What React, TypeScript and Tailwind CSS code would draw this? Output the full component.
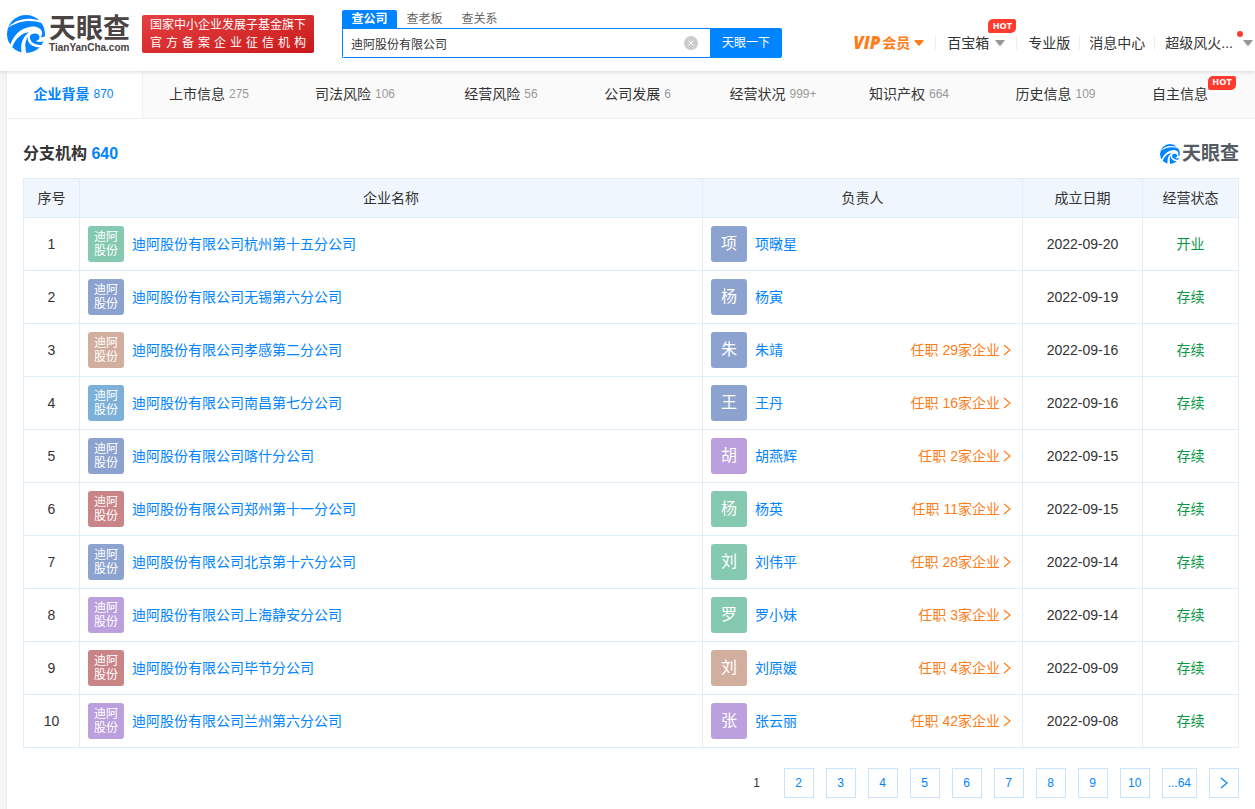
import { useState } from "react";
import { clsx } from "clsx";

type Branch = {
  name: string;
  logo: string;
  person: string;
  avatar: string;
  posts?: number;
  date: string;
  status: string;
};

const GREEN = "bg-[#84c9b0]";
const BLUE = "bg-[#8da3cf]";
const TAN = "bg-[#d2ae9e]";
const SKY = "bg-[#7db0d8]";
const RED = "bg-[#c98488]";
const PURPLE = "bg-[#bc9fdd]";

const branches: Branch[] = [
  { name: "迪阿股份有限公司杭州第十五分公司", logo: GREEN, person: "项暾星", avatar: BLUE, date: "2022-09-20", status: "开业" },
  { name: "迪阿股份有限公司无锡第六分公司", logo: BLUE, person: "杨寅", avatar: BLUE, date: "2022-09-19", status: "存续" },
  { name: "迪阿股份有限公司孝感第二分公司", logo: TAN, person: "朱靖", avatar: BLUE, posts: 29, date: "2022-09-16", status: "存续" },
  { name: "迪阿股份有限公司南昌第七分公司", logo: SKY, person: "王丹", avatar: BLUE, posts: 16, date: "2022-09-16", status: "存续" },
  { name: "迪阿股份有限公司喀什分公司", logo: BLUE, person: "胡燕辉", avatar: PURPLE, posts: 2, date: "2022-09-15", status: "存续" },
  { name: "迪阿股份有限公司郑州第十一分公司", logo: RED, person: "杨英", avatar: GREEN, posts: 11, date: "2022-09-15", status: "存续" },
  { name: "迪阿股份有限公司北京第十六分公司", logo: BLUE, person: "刘伟平", avatar: GREEN, posts: 28, date: "2022-09-14", status: "存续" },
  { name: "迪阿股份有限公司上海静安分公司", logo: PURPLE, person: "罗小妹", avatar: GREEN, posts: 3, date: "2022-09-14", status: "存续" },
  { name: "迪阿股份有限公司毕节分公司", logo: RED, person: "刘原媛", avatar: TAN, posts: 4, date: "2022-09-09", status: "存续" },
  { name: "迪阿股份有限公司兰州第六分公司", logo: PURPLE, person: "张云丽", avatar: PURPLE, posts: 42, date: "2022-09-08", status: "存续" },
];

const sections = [
  { label: "企业背景", count: "870" },
  { label: "上市信息", count: "275" },
  { label: "司法风险", count: "106" },
  { label: "经营风险", count: "56" },
  { label: "公司发展", count: "6" },
  { label: "经营状况", count: "999+" },
  { label: "知识产权", count: "664" },
  { label: "历史信息", count: "109" },
  { label: "自主信息", hot: true },
];

const pages = ["2", "3", "4", "5", "6", "7", "8", "9", "10", "...64"];

function LogoMark({ className }: { className: string }) {
  return (
    <svg aria-hidden="true" viewBox="0 0 114 114" className={className}>
      <circle cx="57" cy="57" r="57" fill="#0084ff" />
      <g fill="#fff">
        <path d="M2 40C20 14 58 4 97 16l8 9C72 12 32 18 2 40z" />
        <path d="M9 90C20 62 38 40 70 35c16-3 30 3 34 13 3 8 1 14-3 19l14-2-1 12c-10 5-20 5-28 1 10-2 14-10 10-17-4-6-14-7-22-3-2 1-4 2-5 4-2 16 8 27 38 29l-5 7C74 98 60 84 62 66c-8 12-9 28-4 48H44c-5-24 2-47 22-62C44 54 26 70 15 98z" />
      </g>
    </svg>
  );
}

function Caret({ className }: { className: string }) {
  return (
    <svg aria-hidden="true" viewBox="0 0 10 6" className={clsx("h-[6px] w-[10px] shrink-0 fill-current", className)}>
      <path d="M1 0h8q1 .2.500 1L5.700 5.600q-.7.600-1.400 0L.5 1Q0 .2 1 0z" />
    </svg>
  );
}

function Chevron({ className }: { className?: string }) {
  return (
    <svg aria-hidden="true" viewBox="0 0 8 12" className={clsx("h-3 w-2 fill-none stroke-current", className)}>
      <path d="M1 1l6 5-6 5" strokeWidth="1.200" />
    </svg>
  );
}

function HotBadge({ className }: { className: string }) {
  return (
    <span
      className={clsx(
        "flex h-[14px] w-7 items-center justify-center rounded-tl-[5px] rounded-tr-[2px] rounded-br-[5px] rounded-bl-[2px] bg-[#ff3b30] font-['Open_Sans',sans-serif] text-[9px] font-bold text-white",
        className,
      )}
    >
      HOT
    </span>
  );
}

function Header() {
  const [query, setQuery] = useState("迪阿股份有限公司");

  return (
    <header className="relative z-10 flex h-[71px] items-start bg-white pl-[7px] shadow-[0_1px_4px_rgba(0,0,0,0.14)]">
      <a href="#" className="mt-[15px] flex shrink-0 items-start text-[#4a4343]">
        <LogoMark className="h-[38px] w-[38px]" />
        <span className="ml-1 flex w-[82px] flex-col">
          <span className="text-[27px] leading-7 font-bold whitespace-nowrap">天眼查</span>
          <span className="text-[10px] leading-[10px] font-bold">TianYanCha.com</span>
        </span>
      </a>
      <div className="mt-[15px] ml-[11px] h-[38px] w-[172px] shrink-0 rounded-[2px] bg-linear-to-br from-[#e63f41] to-[#c91719] px-2 pt-px text-xs leading-[18px] text-white">
        <p className="whitespace-nowrap">国家中小企业发展子基金旗下</p>
        <p className="[text-align-last:justify]">官 方 备 案 企 业 征 信 机 构</p>
      </div>

      <form className="mt-[10px] ml-7 w-[440px] shrink-0" onSubmit={(event) => event.preventDefault()}>
        <div className="flex h-[18px] text-xs leading-[18px] text-[#666]">
          <button type="button" className="w-[55px] rounded-t-[2px] bg-[#0084ff] font-bold text-white">查公司</button>
          <button type="button" className="w-[55px]">查老板</button>
          <button type="button" className="w-[55px]">查关系</button>
        </div>
        <div className="flex h-[30px]">
          <div className="relative flex-1">
            <input
              type="text"
              aria-label="查公司"
              value={query}
              onChange={(event) => setQuery(event.target.value)}
              className="h-full w-full rounded-bl-[2px] border border-r-0 border-[#0084ff] bg-white px-2 text-xs text-[#333] outline-none"
            />
            <button type="button" aria-label="清空" onClick={() => setQuery("")} className="absolute top-2 right-3">
              <svg aria-hidden="true" viewBox="0 0 14 14" className="h-[14px] w-[14px]">
                <circle cx="7" cy="7" r="7" fill="#ccc" />
                <path d="M4.500 4.500l5 5M9.500 4.500l-5 5" stroke="#fff" />
              </svg>
            </button>
          </div>
          <button type="submit" className="w-[72px] rounded-r-[2px] bg-[#0084ff] text-xs text-white">天眼一下</button>
        </div>
      </form>

      <nav className="mt-8 ml-auto flex h-[22px] shrink-0 items-center text-sm whitespace-nowrap text-[#333]">
        <a href="#" className="flex items-center text-[#ff7d18]">
          <span className="font-['Open_Sans',sans-serif] text-[17px] font-extrabold italic">VIP</span>
          <span className="ml-[2px] font-bold">会员</span>
          <Caret className="ml-1" />
        </a>
        <a href="#" className="relative ml-[11px] flex items-center pl-3">
          <span className="absolute left-0 h-[14px] w-px bg-[#eee]" />
          百宝箱
          <Caret className="ml-[6px] text-[#999]" />
          <HotBadge className="absolute -top-[14px] left-[53px]" />
        </a>
        <a href="#" className="relative ml-[11px] flex items-center pl-3">
          <span className="absolute left-0 h-[14px] w-px bg-[#eee]" />
          专业版
        </a>
        <a href="#" className="relative ml-[9px] flex items-center pl-[10px]">
          <span className="absolute left-0 h-[14px] w-px bg-[#eee]" />
          消息中心
        </a>
        <a href="#" className="relative ml-[9px] flex items-center pr-[2px] pl-[11px]">
          <span className="absolute left-0 h-[14px] w-px bg-[#eee]" />
          超级风火...
          <Caret className="ml-[10px] text-[#999]" />
          <span className="absolute -top-[2px] right-3 h-[6px] w-[6px] rounded-full bg-[#ff3b30]" />
        </a>
      </nav>
    </header>
  );
}

function SectionTabs() {
  return (
    <nav className="grid h-12 grid-cols-[136fr_134fr_158fr_134fr_139fr_132fr_140fr_153fr_122fr] border-b border-[#f0f0f0] bg-[#fafafa]">
      {sections.map((section, index) => (
        <a
          key={section.label}
          href="#"
          className={clsx(
            "flex items-center justify-center gap-1 pb-[2px] text-sm whitespace-nowrap",
            index === 0 && "border-r border-[#f0f0f0] bg-white font-bold text-[#0084ff]",
            index > 0 && "text-[#333]",
            section.count && "pr-[2px]",
          )}
        >
          {section.label}
          {section.count ? (
            <span className={clsx("text-xs font-normal", index > 0 && "text-[#999]")}>{section.count}</span>
          ) : null}
          {section.hot ? <HotBadge className="-ml-1 mb-[22px]" /> : null}
        </a>
      ))}
    </nav>
  );
}

function BranchTable() {
  return (
    <table className="w-full table-fixed border-collapse text-sm text-[#333] [&_td]:border [&_td]:border-[#e0eefa] [&_th]:border [&_th]:border-[#e0eefa] [&_th]:font-normal">
      <colgroup>
        <col className="w-14" />
        <col />
        <col className="w-80" />
        <col className="w-[120px]" />
        <col className="w-24" />
      </colgroup>
      <thead>
        <tr className="h-[39px] bg-[#eff6fd]">
          <th>序号</th>
          <th>企业名称</th>
          <th>负责人</th>
          <th>成立日期</th>
          <th>经营状态</th>
        </tr>
      </thead>
      <tbody>
        {branches.map((branch, index) => (
          <tr key={branch.name} className="h-[53px] text-center">
            <td>{index + 1}</td>
            <td className="px-2">
              <div className="flex items-center gap-2">
                <span className={clsx("flex h-9 w-9 shrink-0 flex-col items-center justify-center rounded-[3px] text-xs leading-[14px] text-white", branch.logo)}>
                  <span>迪阿</span>
                  <span>股份</span>
                </span>
                <a href="#" className="text-[#0084ff]">{branch.name}</a>
              </div>
            </td>
            <td className="px-2">
              <div className="flex items-center gap-2">
                <span className={clsx("flex h-9 w-9 shrink-0 items-center justify-center rounded-[3px] text-base text-white", branch.avatar)}>
                  {branch.person[0]}
                </span>
                <a href="#" className="text-[#0084ff]">{branch.person}</a>
                {branch.posts ? (
                  <a href="#" className="mr-[3px] ml-auto flex items-center text-[#ff7d18]">
                    任职 {branch.posts}家企业
                    <Chevron className="ml-[3px]" />
                  </a>
                ) : null}
              </div>
            </td>
            <td>{branch.date}</td>
            <td className="text-[#089944]">{branch.status}</td>
          </tr>
        ))}
      </tbody>
    </table>
  );
}

function Pagination() {
  return (
    <nav aria-label="分页" className="mt-5 flex justify-end gap-3 text-xs text-[#0084ff]">
      <span className="flex h-[30px] w-[30px] items-center justify-center text-[#333]">1</span>
      {pages.map((page) => (
        <a key={page} href="#" className="flex h-[30px] min-w-[30px] items-center justify-center border border-[#c8e4ff] px-[5px]">
          {page}
        </a>
      ))}
      <a href="#" aria-label="下一页" className="flex h-[30px] w-[30px] items-center justify-center border border-[#c8e4ff]">
        <Chevron />
      </a>
    </nav>
  );
}

export default function App() {
  return (
    <div className="min-h-screen bg-[#f5f5f5] font-['Liberation_Sans','Noto_Sans_CJK_SC',sans-serif]">
      <Header />
      <main className="ml-[7px] bg-white pb-3 shadow-[0_0_2px_rgba(0,0,0,0.12)]">
        <SectionTabs />
        <section className="px-4">
          <div className="flex h-[59px] items-center justify-between pt-[10px]">
            <h2 className="text-base font-bold text-[#333]">
              分支机构 <span className="text-[#0084ff]">640</span>
            </h2>
            <span className="flex items-center text-[19px] leading-5 font-bold text-[#555b63]">
              <LogoMark className="mr-[2px] h-5 w-5" />
              天眼查
            </span>
          </div>
          <BranchTable />
          <Pagination />
        </section>
      </main>
    </div>
  );
}
